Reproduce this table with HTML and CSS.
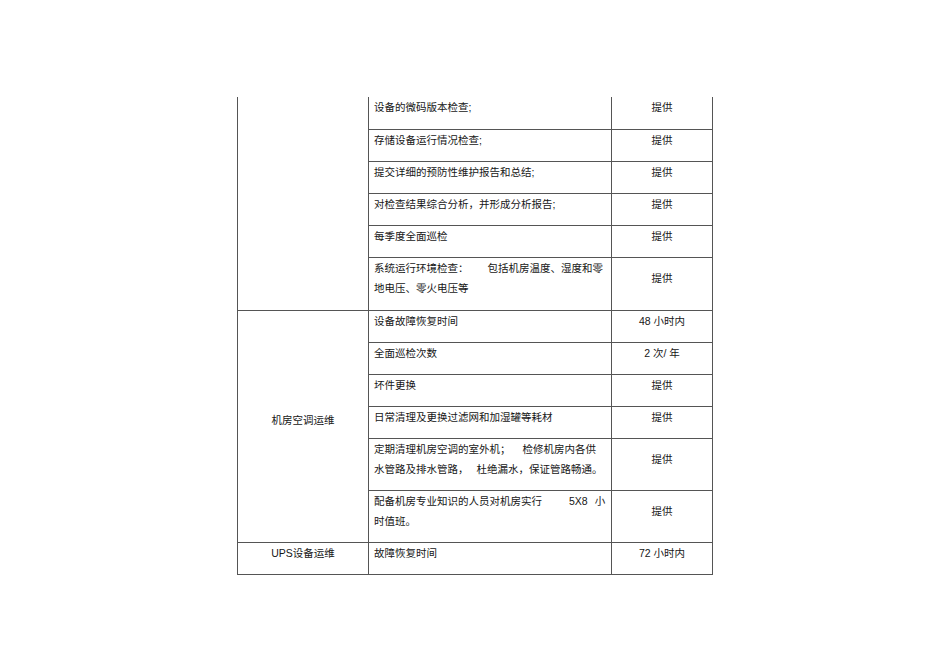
FILE: index.html
```html
<!DOCTYPE html>
<html lang="zh-CN">
<head>
<meta charset="utf-8">
<title>运维服务内容</title>
<link rel="stylesheet" href="styles.css">
</head>
<body>
<div class="page">
  <div class="sheet">
    <div class="cell c1 span-a"></div>
    <div class="cell c2 r1">设备的微码版本检查;</div>
    <div class="cell c3 r1">提供</div>
    <div class="cell c2 r2">存储设备运行情况检查;</div>
    <div class="cell c3 r2">提供</div>
    <div class="cell c2 r3">提交详细的预防性维护报告和总结;</div>
    <div class="cell c3 r3">提供</div>
    <div class="cell c2 r4">对检查结果综合分析，并形成分析报告;</div>
    <div class="cell c3 r4">提供</div>
    <div class="cell c2 r5">每季度全面巡检</div>
    <div class="cell c3 r5">提供</div>
    <div class="cell c2 r6"><div class="lines"><div>系统运行环境检查：<span class="g19">包括机房温度、湿度和零</span></div><div>地电压、零火电压等</div></div></div>
    <div class="cell c3 r6">提供</div>

    <div class="cell c1 span-b">机房空调运维</div>
    <div class="cell c2 r7">设备故障恢复时间</div>
    <div class="cell c3 r7">48 小时内</div>
    <div class="cell c2 r8">全面巡检次数</div>
    <div class="cell c3 r8">2 次/ 年</div>
    <div class="cell c2 r9">坏件更换</div>
    <div class="cell c3 r9">提供</div>
    <div class="cell c2 r10">日常清理及更换过滤网和加湿罐等耗材</div>
    <div class="cell c3 r10">提供</div>
    <div class="cell c2 r11"><div class="lines"><div>定期清理机房空调的室外机；<span class="g12">检修机房内各供</span></div><div>水管路及排水管路，<span class="g8">杜绝漏水，保证管路畅通。</span></div></div></div>
    <div class="cell c3 r11">提供</div>
    <div class="cell c2 r12"><div class="lines"><div>配备机房专业知识的人员对机房实行<span class="g27">5X8</span><span class="g7">小</span></div><div>时值班。</div></div></div>
    <div class="cell c3 r12">提供</div>

    <div class="cell c1 r13">UPS设备运维</div>
    <div class="cell c2 r13">故障恢复时间</div>
    <div class="cell c3 r13">72 小时内</div>
  </div>
</div>
</body>
</html>
```
FILE: styles.css
```css
html, body {
  margin: 0;
  padding: 0;
  background: #ffffff;
}

.page {
  padding: 97px 0 0 237px;
}

.sheet {
  display: grid;
  width: max-content;
  grid-template-columns: 130px 242px 100px;
  grid-template-rows: 32px 31px 31px 31px 31px 52px 31px 31px 31px 31px 51px 51px 31px;
  gap: 1px;
  padding: 0 1px 1px 1px;
  background: #555555;
  font-family: "Liberation Sans", "Noto Sans CJK SC", sans-serif;
  font-size: 10.5px;
  line-height: 20px;
  color: #161616;
}

.cell {
  background: #ffffff;
  display: flex;
  align-items: center;
  padding-bottom: 12px;
  box-sizing: border-box;
  white-space: nowrap;
}

.c1 { grid-column: 1; justify-content: center; }
.c2 { grid-column: 2; padding-left: 5px; }
.c3 { grid-column: 3; justify-content: center; }

.span-a { grid-row: 1 / 7; }
.span-b { grid-row: 7 / 13; padding-bottom: 14px; }

.r1 { grid-row: 1; }
.r2 { grid-row: 2; }
.r3 { grid-row: 3; }
.r4 { grid-row: 4; }
.r5 { grid-row: 5; }
.r6 { grid-row: 6; }
.r7 { grid-row: 7; }
.r8 { grid-row: 8; }
.r9 { grid-row: 9; }
.r10 { grid-row: 10; }
.r11 { grid-row: 11; }
.r12 { grid-row: 12; }
.r13 { grid-row: 13; }

.lines {
  display: flex;
  flex-direction: column;
}

.g19 { margin-left: 19px; }
.g12 { margin-left: 12px; }
.g8 { margin-left: 8px; }
.g27 { margin-left: 27px; }
.g7 { margin-left: 7px; }
```
